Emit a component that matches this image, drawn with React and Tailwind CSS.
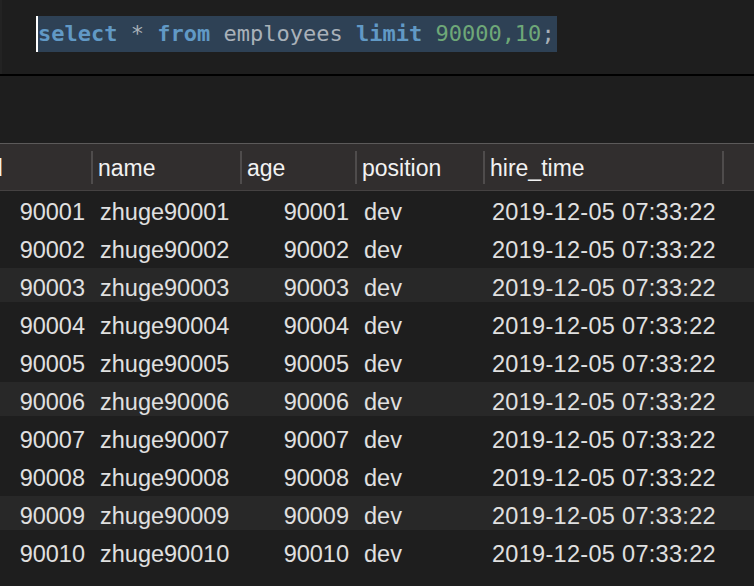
import React from 'react'

const cols = [
    { key: 'id', label: 'id', w: 113, align: 'right' },
    { key: 'name', label: 'name', w: 149, align: 'left' },
    { key: 'age', label: 'age', w: 115, align: 'right' },
    { key: 'position', label: 'position', w: 128, align: 'left' },
    { key: 'hire_time', label: 'hire_time', w: 239, align: 'left' },
]

const rows = Array.from({ length: 10 }).map((_, i) => {
    const n = 90001 + i
    return { id: n, name: 'zhuge' + n, age: n, position: 'dev', hire_time: '2019-12-05 07:33:22' }
})

const sans = { fontFamily: '"Liberation Sans", Arial, sans-serif' }

export default function App() {
    return (
        <div className="w-[754px] h-[586px] overflow-hidden bg-[#1e1e1e] flex flex-col" style={sans}>
            {/* editor */}
            <div className="h-[76px] shrink-0 flex border-b-2 border-black">
                <div className="w-[2px] bg-[#232323]" />
                <div className="flex-1 pt-[16px] pl-[34px]">
                    <div className="inline-flex h-[36px] items-center bg-[#2e4155] border-l-2 border-white pr-[2px] text-[22px] leading-[36px] whitespace-pre"
                        style={{ fontFamily: '"DejaVu Sans Mono", monospace' }}>
                        <span className="text-[#6199c5] font-bold">select</span>
                        <span className="text-[#a9b1b9]"> * </span>
                        <span className="text-[#6199c5] font-bold">from</span>
                        <span className="text-[#a9b1b9]"> employees </span>
                        <span className="text-[#6199c5] font-bold">limit</span>
                        <span className="text-[#6ea878]"> 90000,10</span>
                        <span className="text-[#a9b1b9]">;</span>
                    </div>
                </div>
            </div>

            <div className="h-[67px] shrink-0" />

            {/* result grid */}
            <div className="flex-1 border-t border-[#5c5a5a] overflow-hidden">
                <div className="-ml-[20px] w-[800px]">
                    <div className="h-[47px] bg-[#312e2e] border-b border-[#454242] flex items-center">
                        {cols.map(c => (
                            <div key={c.key} className="h-full flex items-center" style={{ width: c.w }}>
                                <span className="flex-1 pl-[5px] pt-[2px] text-[23px] text-[#f2f2f2]">{c.label}</span>
                                <div className="w-[2px] h-[33px] bg-[#4f4c4c]" />
                            </div>
                        ))}
                        <div className="flex-1" />
                    </div>
                    <div className="h-[1px]" />
                    {rows.map((r, ri) => (
                        <div key={r.id} className="h-[38px]">
                            <div className={`h-[34px] ${ri % 3 === 2 ? 'bg-[#282828]' : ''}`} />
                            <div className="h-[38px] -mt-[34px] pt-[4px] flex items-center text-[23.5px] text-[#e0e0e0]">
                                {cols.map(c => (
                                    <div key={c.key}
                                        className={`whitespace-nowrap ${c.align === 'right' ? 'text-right pr-[8px]' : 'text-left pl-[7px]'} ${c.key === 'hire_time' ? 'tracking-[0.3px]' : ''}`}
                                        style={{ width: c.w }}>
                                        {r[c.key]}
                                    </div>
                                ))}
                            </div>
                        </div>
                    ))}
                </div>
            </div>
        </div>
    )
}
